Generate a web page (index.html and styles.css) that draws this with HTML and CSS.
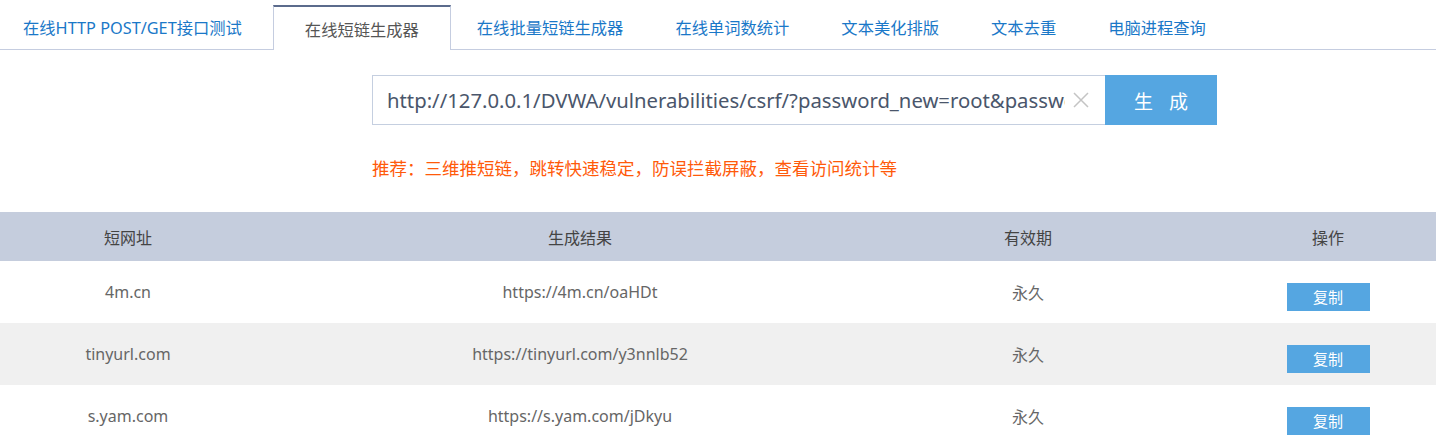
FILE: index.html
```html
<!DOCTYPE html>
<html lang="zh-CN">
<head>
<meta charset="utf-8">
<title>在线短链生成器</title>
<link rel="stylesheet" href="styles.css">
</head>
<body>
<nav class="tabs">
  <a class="tab" href="#">在线HTTP POST/GET接口测试</a>
  <a class="tab active" href="#">在线短链生成器</a>
  <a class="tab" href="#">在线批量短链生成器</a>
  <a class="tab" href="#">在线单词数统计</a>
  <a class="tab" href="#">文本美化排版</a>
  <a class="tab" href="#">文本去重</a>
  <a class="tab" href="#">电脑进程查询</a>
</nav>
<main class="main">
  <div class="form">
    <div class="field">
      <input class="url" type="text" value="http://127.0.0.1/DVWA/vulnerabilities/csrf/?password_new=root&amp;password_conf=root&amp;Change=Change">
      <span class="clear"><svg width="16" height="16" viewBox="0 0 16 16"><path d="M1 1L15 15M15 1L1 15" stroke="#c4c4c4" stroke-width="1.5" fill="none"/></svg></span>
    </div>
    <button class="gen">生成</button>
  </div>
  <p class="tip">推荐：三维推短链，跳转快速稳定，防误拦截屏蔽，查看访问统计等</p>
  <table class="result">
    <colgroup><col class="c1"><col class="c2"><col class="c3"><col class="c4"></colgroup>
    <thead>
      <tr><th>短网址</th><th>生成结果</th><th>有效期</th><th>操作</th></tr>
    </thead>
    <tbody>
      <tr><td>4m.cn</td><td>https://4m.cn/oaHDt</td><td>永久</td><td><button class="copy">复制</button></td></tr>
      <tr><td>tinyurl.com</td><td>https://tinyurl.com/y3nnlb52</td><td>永久</td><td><button class="copy">复制</button></td></tr>
      <tr><td>s.yam.com</td><td>https://s.yam.com/jDkyu</td><td>永久</td><td><button class="copy">复制</button></td></tr>
    </tbody>
  </table>
</main>
</body>
</html>
```
FILE: styles.css
```css
html, body {
  margin: 0;
  padding: 0;
  background: #fff;
  overflow: hidden;
}
body {
  font-family: "Noto Sans", "Noto Sans CJK SC", sans-serif;
  width: 1504px;
}
.tabs {
  display: flex;
  margin-top: 5px;
  width: 1436px;
  border-bottom: 1px solid #c5cde0;
  height: 44px;
}
.tab {
  display: flex;
  align-items: center;
  padding: 0 26px;
  font-size: 16.3px;
  color: #1a78c8;
  text-decoration: none;
  white-space: nowrap;
  height: 44px;
  box-sizing: border-box;
}
.tab:first-child {
  padding-left: 23px;
  padding-right: 31px;
}
.tab.active {
  color: #555;
  padding: 0 31px;
  background: #fff;
  border-top: 2px solid #5b6b8c;
  border-left: 1px solid #c5cde0;
  border-right: 1px solid #c5cde0;
  height: 45px;
  margin-bottom: -1px;
}
.main {
  padding-top: 25px;
}
.form {
  display: flex;
  margin-left: 372px;
  height: 50px;
}
.field {
  display: flex;
  align-items: center;
  width: 733px;
  box-sizing: border-box;
  border: 1px solid #c5cfe0;
  border-right: none;
  padding: 0 16px 0 14px;
}
.url {
  flex: 1;
  min-width: 0;
  border: none;
  outline: none;
  padding: 0;
  font-family: "Noto Sans", sans-serif;
  font-size: 20.3px;
  color: #4a566b;
  background: transparent;
}
.clear {
  display: flex;
  margin-left: 8px;
}
.gen {
  width: 112px;
  border: none;
  background: #55a6e1;
  color: #fff;
  font-family: "Noto Sans CJK SC", sans-serif;
  font-size: 19px;
  letter-spacing: 16px;
  padding: 0 0 0 16px;
}
.tip {
  margin: 0;
  margin-left: 372px;
  margin-top: 31px;
  font-family: "Noto Sans CJK SC", sans-serif;
  font-size: 17.5px;
  line-height: 24px;
  color: #ff5a0a;
}
.result {
  margin-top: 32px;
  width: 1504px;
  border-collapse: collapse;
  table-layout: fixed;
}
.c1 { width: 256px; }
.c2 { width: 648px; }
.c3 { width: 248px; }
.c4 { width: 352px; }
.result th {
  background: #c5cddd;
  height: 49px;
  padding: 0;
  font-weight: normal;
  font-size: 16px;
  color: #444;
  text-align: center;
}
.result td {
  height: 62px;
  padding: 0;
  text-align: center;
  font-size: 16px;
  color: #666;
}
.result tbody tr:nth-child(even) td {
  background: #f0f0f0;
}
.copy {
  width: 83px;
  height: 28px;
  margin-top: 9px;
  border: none;
  background: #55a6e1;
  color: #fff;
  font-family: "Noto Sans CJK SC", sans-serif;
  font-size: 15px;
  padding: 0;
}
```
